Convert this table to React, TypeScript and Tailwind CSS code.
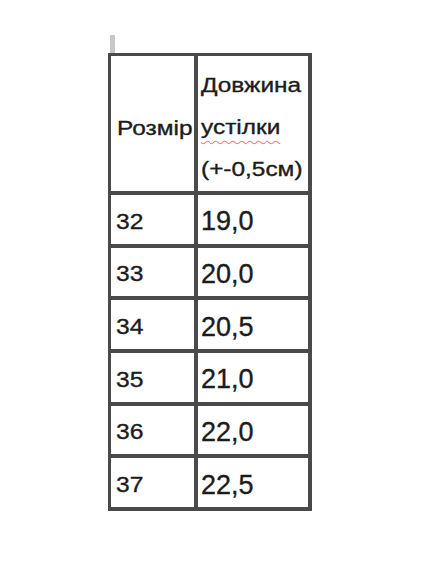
const rows: [string, string][] = [
  ["32", "19,0"],
  ["33", "20,0"],
  ["34", "20,5"],
  ["35", "21,0"],
  ["36", "22,0"],
  ["37", "22,5"],
];

const font = { fontFamily: '"Liberation Sans", Arial, sans-serif' };

export default function App() {
  return (
    <div className="w-[428px] h-[570px] bg-white pl-[108px] pt-[35px]" style={font}>
      <div className="ml-[2px] w-[5px] h-[18px] bg-[#c8c8c8]" />
      <div className="grid w-[204px] grid-cols-[83px_110px] grid-rows-[135px_repeat(6,48.67px)] gap-[4px] bg-[#4a4a4a] pt-[3px] pl-[3px] pr-[4px] pb-[4px] text-[#1c1c1c] [-webkit-text-stroke:0.35px_#1c1c1c]">
        <div className="flex items-center bg-white pl-[6px] pt-[8px]">
          <span className="inline-block origin-left scale-x-[1.22] text-[20px] leading-[42px]">Розмір</span>
        </div>
        <div className="flex flex-col justify-center bg-white pl-[3px] pt-[6px] text-[20px] leading-[42px]">
          <span className="inline-block origin-left scale-x-[1.22]">Довжина</span>
          <span className="inline-block origin-left scale-x-[1.22]">
            <span className="underline decoration-wavy decoration-[#f08080] decoration-[1px] underline-offset-[6px]">устілки</span>
          </span>
          <span className="inline-block origin-left scale-x-[1.22]">(+-0,5см)</span>
        </div>
        {rows.map(([size, len]) => (
          <div key={size} className="contents">
            <div className="flex items-center bg-white pl-[5px] pt-[5px]">
              <span className="inline-block origin-left scale-x-[1.12] text-[22px] leading-none">{size}</span>
            </div>
            <div className="flex items-center bg-white pl-[3px] pt-[5px]">
              <span className="text-[27px] leading-none">{len}</span>
            </div>
          </div>
        ))}
      </div>
    </div>
  );
}
